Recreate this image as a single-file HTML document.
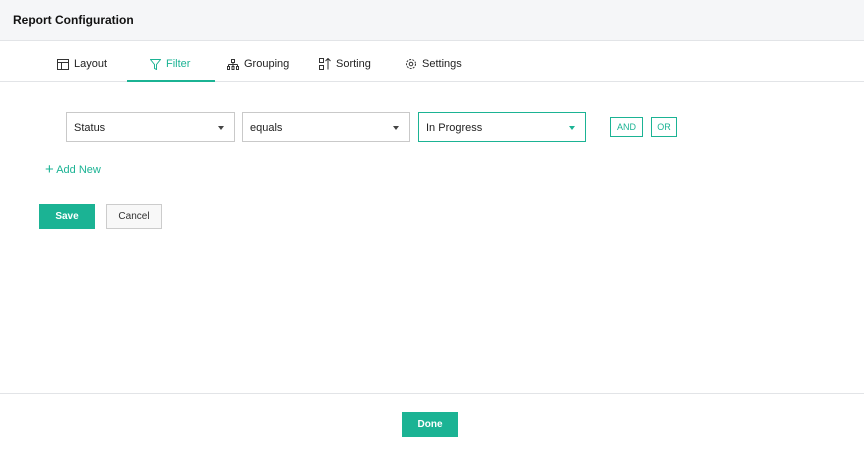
<!DOCTYPE html>
<html><head><style>
*{box-sizing:border-box;margin:0;padding:0}
body{width:864px;height:456px;background:#fff;font-family:"Liberation Sans",sans-serif;color:#222;position:relative;overflow:hidden;font-size:11px}
.hdr{position:absolute;left:0;top:0;width:864px;height:41px;background:#f5f6f8;border-bottom:1px solid #e2e4e7}
.hdr span{position:absolute;left:13px;top:13px;font-size:12px;font-weight:bold;color:#111}
.tabs{position:absolute;left:0;top:41px;width:864px;height:41px;border-bottom:1px solid #e2e4e7}
.tab{position:absolute;top:17px;font-size:11px;color:#222;display:flex;align-items:center;gap:5px}
.ul{position:absolute;left:127px;top:39px;width:88px;height:2px;background:#1bb394}
.sel{position:absolute;top:112px;height:30px;border:1px solid #c9c9c9;font-size:11px;padding:9px 7px 0}
.sel:after{content:"";position:absolute;right:10px;top:13px;border-left:3px solid transparent;border-right:3px solid transparent;border-top:4px solid #444}
.sel.t{border-color:#1bb394}.sel.t:after{border-top-color:#1bb394}
.ob{position:absolute;top:117px;height:20px;border:1px solid #1bb394;color:#1bb394;font-size:9px;text-align:center;line-height:19px}
.btn{position:absolute;height:25px;font-size:10px;text-align:center;padding-top:7px;line-height:12px}
</style></head><body>
<div class="hdr"><span>Report Configuration</span></div>
<div class="tabs">
<div class="tab" style="left:57px"><svg width="12" height="11"><rect x=".5" y=".5" width="11" height="10" fill="none" stroke="#333"/><path d="M.5 3.5h11M4.5 3.5v7" stroke="#333" fill="none"/></svg>Layout</div>
<div class="tab" style="left:150px;color:#1bb394"><svg width="11" height="11"><path d="M.5 .5h10L6.5 5.5v5l-2-1v-4z" fill="none" stroke="#1bb394"/></svg>Filter</div>
<div class="tab" style="left:227px"><svg width="12" height="11"><path d="M4.5.5h3v3h-3zM6 3.5v2M1.5 5.5h9M1.5 5.5v2M6 5.5v2M10.5 5.5v2M.5 7.5h2v3h-2zM5 7.5h2v3H5zM9.5 7.5h2v3h-2z" fill="none" stroke="#333"/></svg>Grouping</div>
<div class="tab" style="left:319px"><svg width="12" height="12"><path d="M.5.5h4v4h-4zM.5 7.5h4v4h-4zM9 11.5v-11M6.5 3l2.5-2.5L11.5 3" fill="none" stroke="#333"/></svg>Sorting</div>
<div class="tab" style="left:405px"><svg width="12" height="12"><circle cx="6" cy="6" r="4.5" fill="none" stroke="#333" stroke-dasharray="2 1.2"/><circle cx="6" cy="6" r="1.8" fill="none" stroke="#333"/></svg>Settings</div>
<div class="ul"></div>
</div>
<div class="sel" style="left:66px;width:169px">Status</div>
<div class="sel" style="left:242px;width:168px">equals</div>
<div class="sel t" style="left:418px;width:168px">In Progress</div>
<div class="ob" style="left:610px;width:33px">AND</div>
<div class="ob" style="left:651px;width:26px">OR</div>
<div style="position:absolute;left:45px;top:161px;color:#1bb394;font-size:11px"><span style="font-size:15px;font-weight:300;vertical-align:-1px">+</span> Add New</div>
<div class="btn" style="left:39px;top:204px;width:56px;background:#1bb394;color:#fff;font-weight:bold">Save</div>
<div class="btn" style="left:106px;top:204px;width:56px;border:1px solid #ccc;background:#f8f8f8;color:#333;padding-top:6px">Cancel</div>
<div style="position:absolute;left:0;top:393px;width:864px;border-top:1px solid #e2e4e7"></div>
<div class="btn" style="left:402px;top:412px;width:56px;background:#1bb394;color:#fff;font-weight:bold">Done</div>
</body></html>
